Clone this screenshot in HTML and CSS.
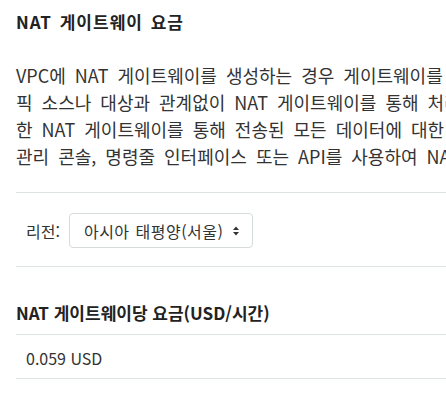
FILE: index.html
```html
<!DOCTYPE html>
<html lang="ko">
<head>
  <meta charset="UTF-8">
  <title>NAT 게이트웨이 요금</title>
  <link rel="stylesheet" href="styles.css">
</head>
<body>
  <div class="page">
    <h2 class="title">NAT 게이트웨이 요금</h2>

    <p class="intro">
      <span>VPC에 NAT 게이트웨이를 생성하는 경우 게이트웨이를 프로비저닝하고 사용할 수 있는 각 시간당 요금과 트래</span>
      <span>픽 소스나 대상과 관계없이 NAT 게이트웨이를 통해 처리되는 각 기가바이트 데이터에 대한 요금이 부과됩니다. 또</span>
      <span>한 NAT 게이트웨이를 통해 전송된 모든 데이터에 대한 표준 AWS 데이터 전송 요금이 부과됩니다. AWS</span>
      <span>관리 콘솔, 명령줄 인터페이스 또는 API를 사용하여 NAT 게이트웨이를 생성할 수 있습니다.</span>
    </p>

    <div class="region-bar">
      <label class="region-label">리전:</label>
      <div class="region-select">
        <span>아시아 태평양(서울)</span>
        <svg class="caret" width="8" height="12" viewBox="0 0 8 12">
          <path d="M4 1.5 L7 5 H1 Z M4 10.5 L7 7 H1 Z" fill="#333"/>
        </svg>
      </div>
    </div>

    <table class="price-table">
      <thead>
        <tr><th>NAT 게이트웨이당 요금(USD/시간)</th></tr>
      </thead>
      <tbody>
        <tr><td>0.059 USD</td></tr>
      </tbody>
    </table>
  </div>
</body>
</html>
```

FILE: styles.css
```css
body {
  margin: 0;
  overflow: hidden;
  font-family: "Noto Sans CJK KR", "Noto Sans", sans-serif;
  color: #333;
  background: #fff;
}

.page {
  width: 900px;
  padding-left: 16px;
}

.title {
  font-size: 17px;
  font-weight: 700;
  color: #222;
  margin: 0;
  padding-top: 10px;
  line-height: 24px;
  letter-spacing: 1px;
  word-spacing: 2px;
}

.intro {
  margin: 28px 0 0;
  font-size: 18px;
  line-height: 27px;
  word-spacing: 4px;
  padding-bottom: 22px;
  border-bottom: 1px solid #dde2e3;
}

.intro span {
  display: block;
  white-space: nowrap;
}

.region-bar {
  display: flex;
  align-items: center;
  gap: 9px;
  padding: 20px 10px 18px;
  border-bottom: 1px solid #dde2e3;
}

.region-label {
  font-size: 16px;
  line-height: 24px;
}

.region-select {
  display: flex;
  align-items: center;
  justify-content: space-between;
  box-sizing: border-box;
  width: 184px;
  height: 35px;
  padding: 0 12px 0 14px;
  border: 1px solid #d5dadb;
  border-radius: 4px;
  font-size: 16px;
  line-height: 24px;
  letter-spacing: 0.5px;
  word-spacing: 1px;
}

.price-table {
  margin-top: 34px;
  border-collapse: collapse;
  width: 100%;
}

.price-table th {
  text-align: left;
  font-size: 17px;
  font-weight: 700;
  color: #222;
  line-height: 24px;
  padding: 0 0 9px;
  border-bottom: 1px solid #dde2e3;
}

.price-table td {
  font-size: 16px;
  line-height: 24px;
  padding: 11px 10px 8px;
  border-bottom: 1px solid #dde2e3;
}
```
